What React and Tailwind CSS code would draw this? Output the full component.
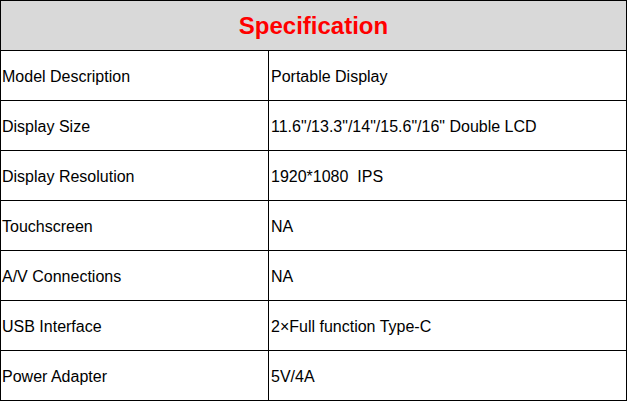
const rows = [
  ['Model Description', 'Portable Display'],
  ['Display Size', '11.6"/13.3"/14"/15.6"/16" Double LCD'],
  ['Display Resolution', '1920*1080  IPS'],
  ['Touchscreen', 'NA'],
  ['A/V Connections', 'NA'],
  ['USB Interface', '2×Full function Type-C'],
  ['Power Adapter', '5V/4A'],
];

export default function App() {
  return (
    <div className="w-[627px] h-[401px] bg-white font-['Liberation_Sans',Arial,sans-serif] text-black">
      <div className="border border-black">
        {/* Header */}
        <div className="h-[50px] bg-[#d9d9d9] border-b border-black flex items-center justify-center">
          <span className="text-[24px] font-bold text-[#ff0000] leading-normal">Specification</span>
        </div>

        {rows.map(([label, value], i) => (
          <div
            key={label}
            className={i < rows.length - 1 ? 'flex h-[50px] border-b border-black' : 'flex h-[49px]'}
          >
            <div className="w-[268px] border-r border-black flex items-center pl-[1px] pt-[2px]">
              <span className="text-[16px] leading-normal whitespace-pre">{label}</span>
            </div>
            <div className="flex-1 flex items-center pl-[2px] pt-[2px]">
              <span className="text-[16px] leading-normal whitespace-pre">{value}</span>
            </div>
          </div>
        ))}
      </div>
    </div>
  );
}
